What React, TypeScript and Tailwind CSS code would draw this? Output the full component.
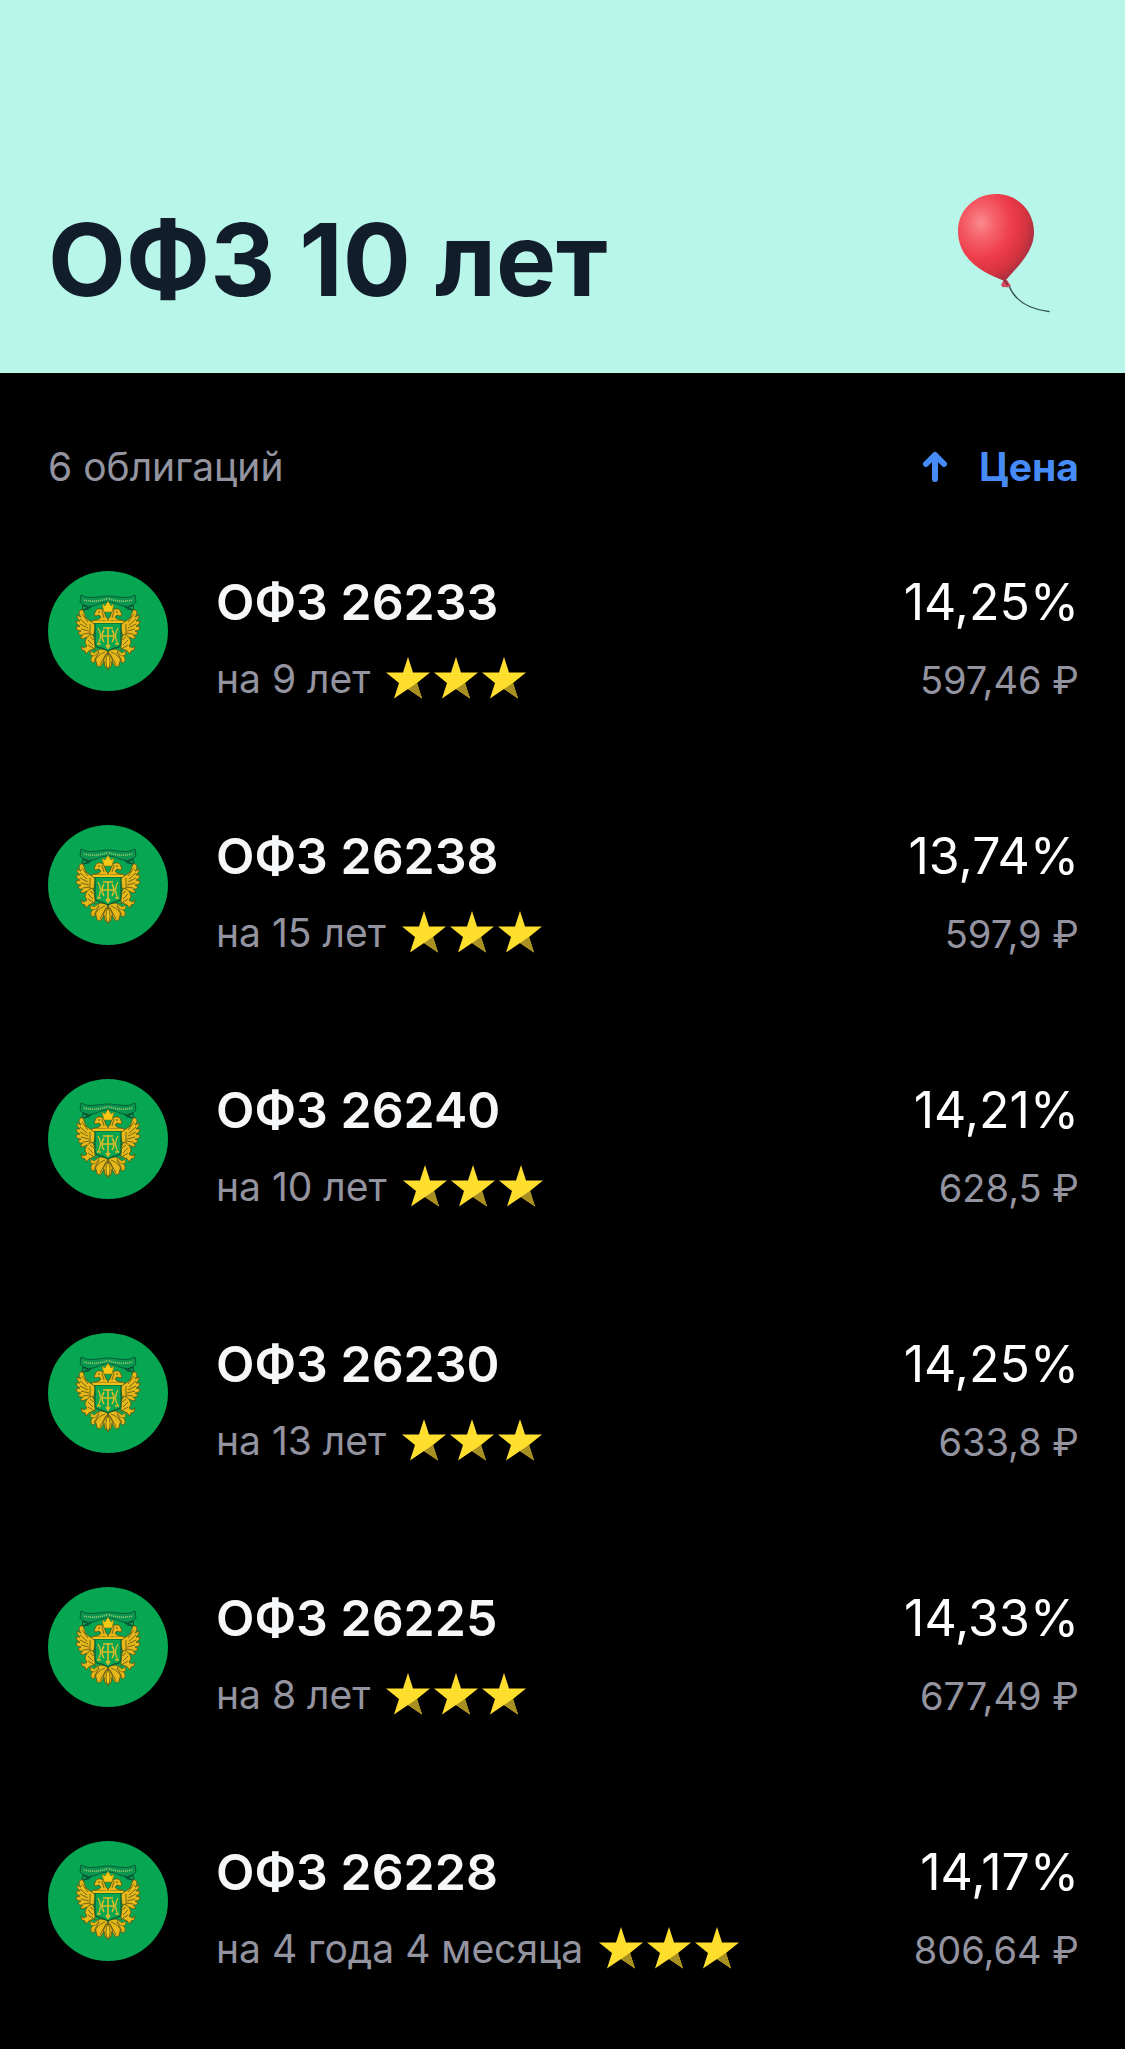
type Bond = {
    name: string
    term: string
    yield: string
    price: string
}

const bonds: Bond[] = [
    { name: "ОФЗ 26233", term: "на 9 лет", yield: "14,25%", price: "597,46 ₽" },
    { name: "ОФЗ 26238", term: "на 15 лет", yield: "13,74%", price: "597,9 ₽" },
    { name: "ОФЗ 26240", term: "на 10 лет", yield: "14,21%", price: "628,5 ₽" },
    { name: "ОФЗ 26230", term: "на 13 лет", yield: "14,25%", price: "633,8 ₽" },
    { name: "ОФЗ 26225", term: "на 8 лет", yield: "14,33%", price: "677,49 ₽" },
    { name: "ОФЗ 26228", term: "на 4 года 4 месяца", yield: "14,17%", price: "806,64 ₽" },
]

function Balloon() {
    return (
        <svg className="h-40 w-[147px] shrink-0" viewBox="0 0 147 160" aria-hidden="true">
            <defs>
                <radialGradient id="balloon" cx="0.3" cy="0.33" r="0.76">
                    <stop offset="0" stopColor="#fb8a8f" />
                    <stop offset="0.25" stopColor="#f5606a" />
                    <stop offset="0.55" stopColor="#ee3c49" />
                    <stop offset="0.8" stopColor="#d4333f" />
                    <stop offset="1" stopColor="#9c3040" />
                </radialGradient>
            </defs>
            <path
                d="M79 116C84 128 96 139 119 141.500"
                fill="none"
                stroke="#3a5558"
                strokeWidth="1.4"
                strokeLinecap="round"
            />
            <path
                d="M66 24C88 24 104 41 104 62C104 82 88 96 75 111C58 105 28 92 28 61C28 40 45 24 66 24Z"
                fill="url(#balloon)"
            />
            <path d="M74 109L77 110L81 116Q78 118 75 117Q72 118 71 115Z" fill="#cf4a5c" />
            <path d="M74 110L78 115" stroke="#7d2733" strokeWidth="1.5" />
        </svg>
    )
}

function EmblemHalf() {
    return (
        <g strokeLinejoin="round">
            {/* ribbon */}
            <path
                d="M60 25C50 25 42 29 33 24L32 31L35 34L34 39L41 38L44 35C49 35 52 31 60 31"
                fill="#0b9650"
                stroke="#075c35"
                strokeWidth="1"
            />
            <path
                d="M36 29Q47 32 60 27.500"
                fill="none"
                stroke="#8fc46a"
                strokeWidth="1.6"
                strokeDasharray="1.2 0.8"
            />
            <path d="M35 34L40 36M36 39L43 35" fill="none" stroke="#064f30" strokeWidth="1.4" />
            <g fill="#e6b81a" stroke="#5b5415" strokeWidth="0.8">
                {/* wing */}
                <path d="M48 53L42 50L38 47L35 39Q31 38 31 43L33 46L29 44Q28 47 32 50L28 50Q28 54 32 55L28 56Q28 60 33 60L30 62Q31 65 35 64L32 67Q35 69 39 66L41 68L46 63Z" />
                <path
                    d="M34 43L40 51M32 48L39 54M32 53L40 57M33 58L41 60M35 63L42 62M42 53L42 64"
                    fill="none"
                />
                {/* head and neck */}
                <path d="M46 44L48 39Q52 36 56 40L58 46L60 48V53H46L43 50L51 48L53 46L51 44L48 45Z" />
                <circle cx="51" cy="41" r="0.8" fill="#4b4a12" stroke="none" />
                <path d="M54 40L56 47M46 50L58 50" fill="none" />
                {/* leg */}
                <path d="M44 63Q37 66 37 72L39 75L36 77L33 75L34 79L37 80L38 83L41 80L47 77L47 68Z" />
                <path d="M40 69L45 74M42 66L46 69M40 74L45 77" fill="none" />
                {/* tail */}
                <path d="M60 79L52 78L46 83L43 87Q42 91 45 92L48 90L49 95Q52 97 54 94L56 90L57 96H60Z" />
                <path d="M57 81Q49 84 47 90M58 83L52 94M51 81L46 90M55 90L60 80" fill="none" />
                <path d="M41 79L46 82L49 80L46 78L51 80L47 85L42 84L43 82Z" strokeWidth="0.5" />
            </g>
        </g>
    )
}

function Emblem() {
    return (
        <svg className="size-[120px] shrink-0 rounded-full bg-[#07a652]" viewBox="0 0 120 120" aria-hidden="true">
            <EmblemHalf />
            <g transform="translate(120 0) scale(-1 1)">
                <EmblemHalf />
            </g>
            {/* shield */}
            <path
                d="M47 52H73V72Q73 77 66 77L60 80L54 77Q47 77 47 72Z"
                fill="#07a652"
                stroke="#0a5a33"
                strokeWidth="1.2"
            />
            <path d="M45 51H75" stroke="#f0bf18" strokeWidth="2" />
            {/* monogram */}
            <g fill="none" stroke="#dcbc26" strokeWidth="1.6">
                <path d="M60 56V76M55 57H65M58 74L60 77L62 74" />
                <path d="M56 59Q52 65 56 71M64 59Q68 65 64 71" />
                <path d="M50 57Q55 65 50 73M70 57Q65 65 70 73M49 73H53M67 73H71M54 65H66" strokeWidth="1.3" />
            </g>
            {/* crown */}
            <path
                d="M56 41L54 33L57 35L60 30L63 35L66 33L64 41Z"
                fill="#f8c914"
                stroke="#8a7414"
                strokeWidth="0.6"
            />
            <path d="M60 82Q64 91 60 99Q56 91 60 82Z" fill="#f5c81c" stroke="#5b5415" strokeWidth="0.8" />
        </svg>
    )
}

function Star() {
    return (
        <svg className="h-[42px] w-11" viewBox="0 0 44 42">
            <path
                d="M22 0L27 15.500H44L31 26L36 41.500L22 32L8 41.500L13 26L0 15.500H17Z"
                fill="#ffde2e"
            />
            <path d="M33 24.500L31 26L36 41.500L22 32Z" fill="#a88f22" />
        </svg>
    )
}

function BondRow({ bond }: { bond: Bond }) {
    return (
        <li>
            <a href="#" className="flex items-start gap-12">
                <Emblem />
                <div className="flex grow flex-col gap-4">
                    <b className="text-[50px] leading-[62px] font-semibold text-[#f6f7f8]">{bond.name}</b>
                    <div className="flex items-start gap-4">
                        <span className="text-[39px] leading-[60px] text-[#9394a0]">{bond.term}</span>
                        <span className="flex gap-1 pt-2" role="img" aria-label="3 из 3">
                            <Star />
                            <Star />
                            <Star />
                        </span>
                    </div>
                </div>
                <div className="flex shrink-0 flex-col gap-4 text-right">
                    <span className="text-[50px] leading-[62px] text-white">{bond.yield}</span>
                    <span className="text-[38px] leading-[62px] text-[#9394a0]">{bond.price}</span>
                </div>
            </a>
        </li>
    )
}

function App() {
    return (
        <div className="min-h-screen bg-black font-[Inter,sans-serif]">
            <header className="flex items-end justify-between bg-[#b8f6ea] pt-[170px] pr-12 pb-[43px] pl-12">
                <h1 className="text-[101px] leading-[142px] font-bold text-[#121d2b]">ОФЗ 10 лет</h1>
                <Balloon />
            </header>
            <main className="pt-16 pr-[46px] pl-12">
                <div className="flex items-center justify-between text-[39px] leading-[60px]">
                    <p className="text-[#9394a0]">6 облигаций</p>
                    <button className="flex items-center gap-8 font-bold text-[#478bf6]">
                        <svg className="h-8 w-6" viewBox="0 0 24 32" fill="none" aria-hidden="true">
                            <path
                                d="M12 28V4M3 13L12 4L21 13"
                                stroke="currentColor"
                                strokeWidth="6"
                                strokeLinecap="round"
                                strokeLinejoin="round"
                            />
                        </svg>
                        Цена
                    </button>
                </div>
                <ul className="flex flex-col gap-[114px] pt-[74px]">
                    {bonds.map((bond) => (
                        <BondRow bond={bond} key={bond.name} />
                    ))}
                </ul>
            </main>
        </div>
    )
}

export default App
